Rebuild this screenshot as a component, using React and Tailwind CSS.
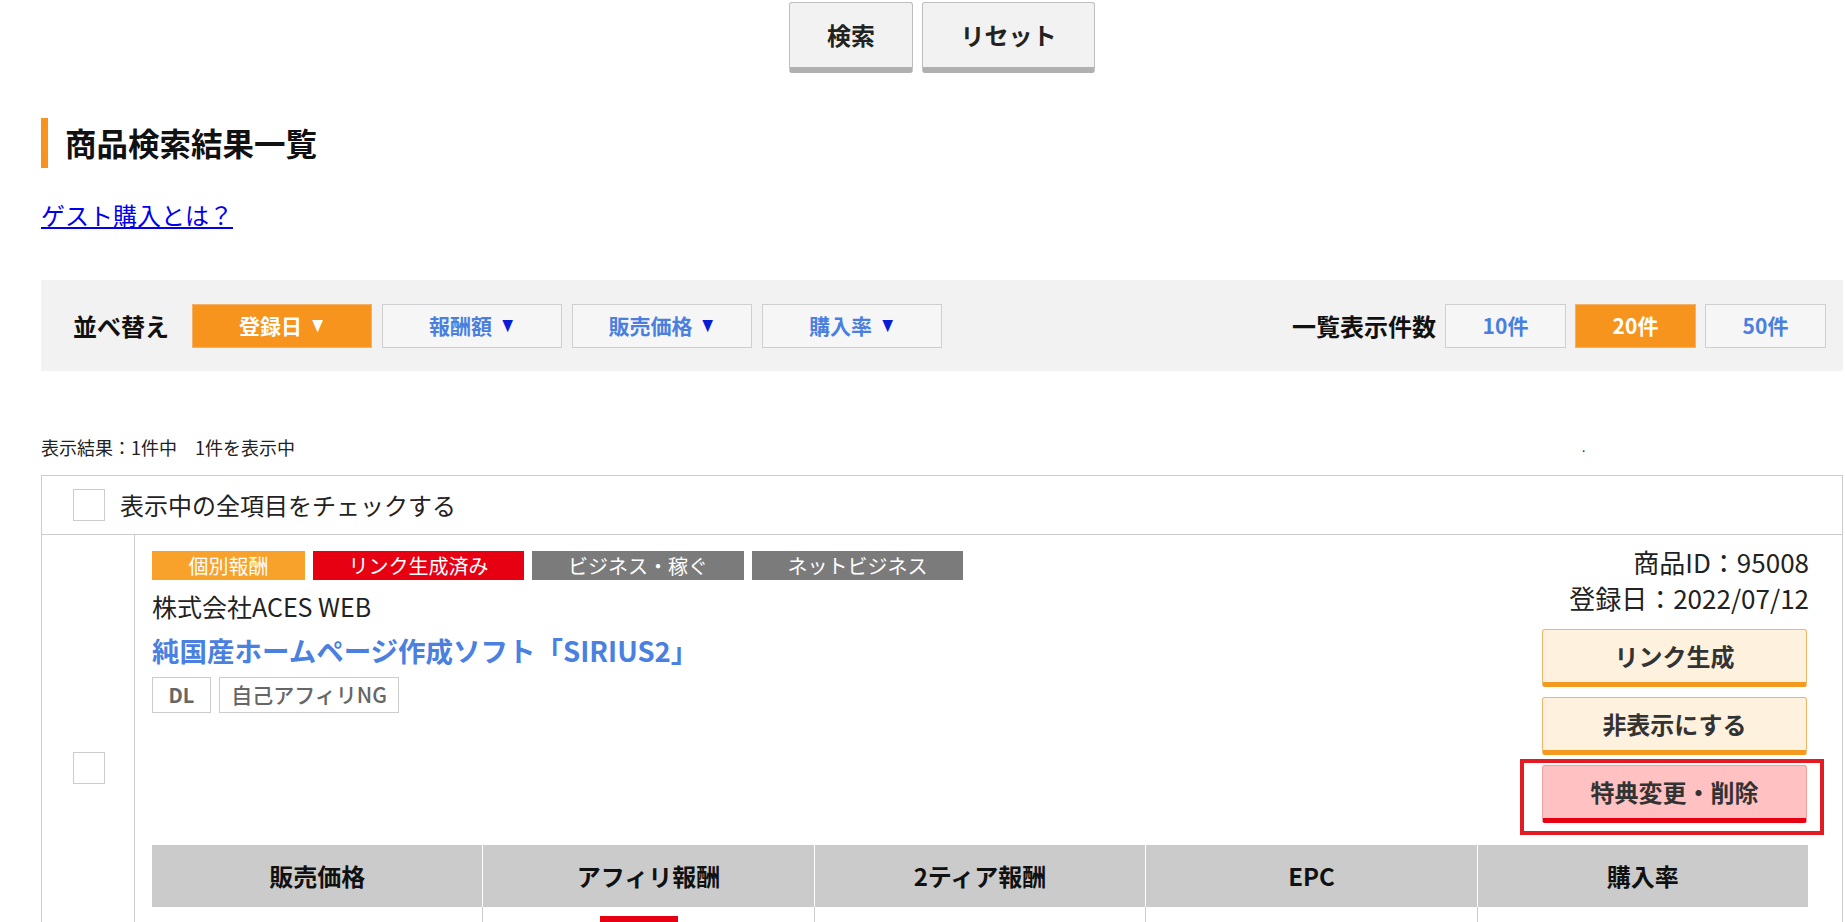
import React from 'react';

const sortKeys = [
  { label: '登録日', active: true },
  { label: '報酬額' },
  { label: '販売価格' },
  { label: '購入率' },
];

const counts = [
  { label: '10件' },
  { label: '20件', active: true },
  { label: '50件' },
];

const tags = [
  { label: '個別報酬', cls: 'w-[153px] bg-[#f8a22b]' },
  { label: 'リンク生成済み', cls: 'w-[211px] bg-[#e60012]' },
  { label: 'ビジネス・稼ぐ', cls: 'w-[212px] bg-[#7b7b7b]' },
  { label: 'ネットビジネス', cls: 'w-[211px] bg-[#7b7b7b]' },
];

const columns = ['販売価格', 'アフィリ報酬', '2ティア報酬', 'EPC', '購入率'];

export default function App() {
  return (
    <div className="min-h-screen overflow-hidden bg-white font-['Noto_Sans_CJK_JP','Noto_Sans',sans-serif] text-[#222]">
      <div className="ml-[41px] w-[1802px]">
        {/* Search / Reset */}
        <div className="flex justify-center gap-[9px] pt-[2px]">
          <button className="h-[71px] w-[124px] rounded-[3px] border border-[#bdbdbd] border-b-[6px] border-b-[#b0b0b0] bg-[#f2f2f2] text-[24px] font-bold text-[#222]">
            検索
          </button>
          <button className="h-[71px] w-[173px] rounded-[3px] border border-[#bdbdbd] border-b-[6px] border-b-[#b0b0b0] bg-[#f2f2f2] text-[24px] font-bold text-[#222]">
            リセット
          </button>
        </div>

        {/* Heading */}
        <h2 className="mt-[45px] flex h-[50px] items-center border-l-[7px] border-[#f7941d] pl-[17px] text-[31.5px] font-bold leading-none text-[#111]">
          商品検索結果一覧
        </h2>

        <div className="mt-[32px] leading-[30px]">
          <a href="#" className="text-[24px] text-[#0000ee] underline">ゲスト購入とは？</a>
        </div>

        {/* Sort bar */}
        <div className="mt-[47px] flex h-[91px] items-center justify-between bg-[#f2f2f2] pl-[32px] pr-[17px]">
          <div className="flex items-center">
            <span className="mr-[23px] text-[24px] font-bold text-[#111]">並べ替え</span>
            <div className="flex gap-[10px]">
              {sortKeys.map((k) => (
                <button
                  key={k.label}
                  className={
                    k.active
                      ? 'flex h-[44px] w-[180px] items-center justify-center gap-[8px] border border-[#f3b068] bg-[#f7941d] text-[21px] font-bold text-white'
                      : 'flex h-[44px] w-[180px] items-center justify-center gap-[8px] border border-[#cfcfcf] bg-[#f6f6f6] text-[21px] font-bold text-[#4a7fe0]'
                  }
                >
                  {k.label}
                  <span className={k.active ? 'inline-block scale-x-75 text-[15px] text-white' : 'inline-block scale-x-75 text-[15px] text-[#0a1bd6]'}>▼</span>
                </button>
              ))}
            </div>
          </div>
          <div className="flex items-center">
            <span className="mr-[9px] text-[24px] font-bold text-[#111]">一覧表示件数</span>
            <div className="flex gap-[9px]">
              {counts.map((c) => (
                <button
                  key={c.label}
                  className={
                    c.active
                      ? 'h-[44px] w-[121px] border border-[#f3b068] bg-[#f7941d] text-[21px] font-bold text-white'
                      : 'h-[44px] w-[121px] border border-[#cfcfcf] bg-[#f6f6f6] text-[21px] font-bold text-[#4a7fe0]'
                  }
                >
                  {c.label}
                </button>
              ))}
            </div>
          </div>
        </div>

        {/* Result count */}
        <div className="mt-[64px] flex text-[18px] leading-[24px] text-[#222]">
          <span className="w-[1541px]">表示結果：1件中　1件を表示中</span>
          <span className="text-[12px]">.</span>
        </div>

        {/* Result list */}
        <div className="mt-[16px] border border-[#cccccc]">
          <div className="flex h-[59px] items-center border-b border-[#cccccc] pl-[31px]">
            <span className="mr-[15px] h-[32px] w-[32px] border border-[#cccccc] bg-white" />
            <span className="text-[24px] text-[#222]">表示中の全項目をチェックする</span>
          </div>

          <div className="flex">
            <div className="w-[93px] shrink-0 border-r border-[#cccccc] pl-[31px] pt-[217px]">
              <span className="block h-[32px] w-[32px] border border-[#cccccc] bg-white" />
            </div>

            <div className="flex-1 pl-[17px] pr-[33px] pt-[16px]">
              <div className="flex items-start justify-between">
                <div>
                  <div className="flex gap-[8px]">
                    {tags.map((t) => (
                      <span key={t.label} className={`h-[29px] text-center text-[20px] leading-[29px] text-white ${t.cls}`}>
                        {t.label}
                      </span>
                    ))}
                  </div>
                  <div className="mt-[9px] text-[25px] leading-[34px] text-[#222]">株式会社ACES WEB</div>
                  <a href="#" className="mt-[9px] block text-[27.5px] font-bold leading-[36px] text-[#4a80e0]">
                    純国産ホームページ作成ソフト「SIRIUS2」
                  </a>
                  <div className="mt-[9px] flex gap-[8px]">
                    <span className="flex h-[36px] w-[59px] items-center justify-center border border-[#cccccc] text-[20px] font-bold text-[#666]">DL</span>
                    <span className="flex h-[36px] w-[180px] items-center justify-center border border-[#cccccc] text-[21px] font-medium text-[#666]">自己アフィリNG</span>
                  </div>
                </div>

                <div className="flex flex-col items-end">
                  <div className="-mt-[7px] text-[26px] leading-[36px] text-[#222]">商品ID：95008</div>
                  <div className="text-[26px] leading-[36px] text-[#222]">登録日：2022/07/12</div>
                  <div className="mr-[2px] mt-[13px] flex w-[265px] flex-col gap-[10px]">
                    <button className="h-[58px] rounded-[3px] border border-[#f1b56a] border-b-[5px] border-b-[#f39a1f] bg-[#fef1de] text-[24px] font-bold text-[#333]">
                      リンク生成
                    </button>
                    <button className="h-[58px] rounded-[3px] border border-[#f1b56a] border-b-[5px] border-b-[#f39a1f] bg-[#fef1de] text-[24px] font-bold text-[#333]">
                      非表示にする
                    </button>
                    <div className="relative">
                      <button className="h-[58px] w-full rounded-[3px] border border-[#f0a0a0] border-b-[5px] border-b-[#e60012] bg-[#ffc1c1] text-[24px] font-bold text-[#333]">
                        特典変更・削除
                      </button>
                      <span className="pointer-events-none absolute -bottom-[12px] -left-[22px] -right-[17px] -top-[6px] border-[4px] border-[#e31b23]" />
                    </div>
                  </div>
                </div>
              </div>

              {/* Stats table */}
              <div className="mt-[22px] grid grid-cols-5">
                {columns.map((c) => (
                  <div key={c} className="flex h-[62px] items-center justify-center border-r border-white bg-[#cbcbcb] text-[24px] font-bold text-[#111] last:border-r-0">
                    {c}
                  </div>
                ))}
                {columns.map((c, i) => (
                  <div key={c + '-v'} className="h-[60px] border-r border-[#cccccc] last:border-r-0">
                    {i === 1 && <div className="ml-[117px] mt-[9px] h-[40px] w-[78px] bg-[#e60012]" />}
                  </div>
                ))}
              </div>
            </div>
          </div>
        </div>
      </div>
    </div>
  );
}
